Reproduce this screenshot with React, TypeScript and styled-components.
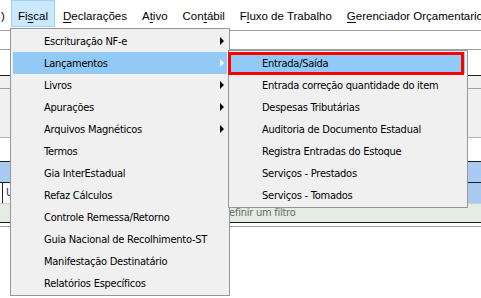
import React from 'react';
import styled, { createGlobalStyle } from 'styled-components';

const GlobalStyle = createGlobalStyle`
  html, body {
    margin: 0;
    padding: 0;
    background: #fff;
    overflow: hidden;
  }
`;

const Window = styled.div`
  position: relative;
  width: 481px;
  height: 298px;
  overflow: hidden;
  background: #fff;
  display: flex;
  flex-direction: column;
  font-family: "Liberation Sans", Arial, sans-serif;
`;

const MenuBar = styled.div`
  height: 30px;
  flex: none;
  display: flex;
  align-items: flex-start;
  border-bottom: 1px solid #a0a0a0;
  font-size: 11.5px;
  color: #000;
  white-space: nowrap;
`;

const BarItem = styled.div<{ $open?: boolean; $w?: number }>`
  box-sizing: border-box;
  height: 27px;
  padding: 9px 6px 0 6px;
  ${(p) => (p.$w ? `width: ${p.$w}px; padding-left: 0;` : '')}
  border: 1px solid ${(p) => (p.$open ? '#99d1ff' : 'transparent')};
  background: ${(p) => (p.$open ? '#cce8ff' : 'transparent')};
  margin-right: 1px;
  u {
    text-decoration: underline;
    text-underline-offset: 2px;
  }
`;

const Band = styled.div<{ $h: number; $bg?: string; $line?: string }>`
  flex: none;
  height: ${(p) => p.$h}px;
  background: ${(p) => p.$bg || '#fff'};
  border-bottom: 1px solid ${(p) => p.$line || '#a0a0a0'};
`;

const GridRow = styled.div<{ $h: number; $line?: string }>`
  flex: none;
  height: ${(p) => p.$h}px;
  display: flex;
  border-bottom: 1px solid ${(p) => p.$line || '#1e1e1e'};
`;

const Cell = styled.div<{ $w?: number; $bg: string }>`
  ${(p) => (p.$w ? `width: ${p.$w}px; flex: none;` : 'flex: 1;')}
  background: ${(p) => p.$bg};
`;

const RowHead = styled.div`
  width: 12px;
  flex: none;
  box-sizing: border-box;
  border-left: 1px solid #1e1e1e;
  margin-left: 2px;
  padding-left: 3px;
  font-size: 11px;
  line-height: 19px;
  color: #1e2a8a;
  background: #fff;
  overflow: hidden;
`;

const FilterRow = styled.div`
  flex: none;
  height: 18px;
  background: #e3ede1;
  border-bottom: 1px solid #1e1e1e;
  padding-left: 143px;
  font-family: "DejaVu Sans", Tahoma, sans-serif;
  font-stretch: condensed;
  font-size: 11px;
  letter-spacing: -0.25px;
  line-height: 18px;
  color: #6b6b6b;
  white-space: nowrap;
`;

const Menu = styled.div<{ $x: number; $y: number; $w: number }>`
  position: absolute;
  left: ${(p) => p.$x}px;
  top: ${(p) => p.$y}px;
  width: ${(p) => p.$w}px;
  box-sizing: border-box;
  padding: 1px 0;
  background: #f0f0f0;
  border: 1px solid #979797;
  font-family: "DejaVu Sans", Tahoma, sans-serif;
  font-stretch: condensed;
  font-size: 11px;
  letter-spacing: -0.25px;
  color: #000;
  z-index: 2;
`;

const Item = styled.div<{ $active?: boolean }>`
  position: relative;
  height: 22px;
  margin: 0 2px;
  padding-left: 31px;
  display: flex;
  align-items: center;
  background: ${(p) => (p.$active ? '#91c9f7' : 'transparent')};
  white-space: nowrap;
`;

const Arrow = styled.span<{ $active?: boolean }>`
  position: absolute;
  right: 3px;
  top: 7px;
  width: 0;
  height: 0;
  border-top: 4px solid transparent;
  border-bottom: 4px solid transparent;
  border-left: 4px solid ${(p) => (p.$active ? '#fff' : '#000')};
`;

const Mark = styled.span`
  position: absolute;
  left: -3px;
  right: 1px;
  top: 0;
  bottom: -1px;
  border: 3px solid #ff0000;
  pointer-events: none;
`;

const fiscal: { label: string; sub?: boolean }[] = [
  { label: 'Escrituração NF-e', sub: true },
  { label: 'Lançamentos', sub: true },
  { label: 'Livros', sub: true },
  { label: 'Apurações', sub: true },
  { label: 'Arquivos Magnéticos', sub: true },
  { label: 'Termos' },
  { label: 'Gia InterEstadual' },
  { label: 'Refaz Cálculos' },
  { label: 'Controle Remessa/Retorno' },
  { label: 'Guia Nacional de Recolhimento-ST' },
  { label: 'Manifestação Destinatário' },
  { label: 'Relatórios Específicos' },
];

const lancamentos = [
  'Entrada/Saída',
  'Entrada correção quantidade do item',
  'Despesas Tributárias',
  'Auditoria de Documento Estadual',
  'Registra Entradas do Estoque',
  'Serviços - Prestados',
  'Serviços - Tomados',
];

export default function App() {
  return (
    <Window>
      <GlobalStyle />
      <MenuBar>
        <BarItem $w={10}>)</BarItem>
        <BarItem $open>
          Fi<u>s</u>cal
        </BarItem>
        <BarItem>
          <u>D</u>eclarações
        </BarItem>
        <BarItem>
          A<u>t</u>ivo
        </BarItem>
        <BarItem>
          Con<u>t</u>ábil
        </BarItem>
        <BarItem>
          F<u>l</u>uxo de Trabalho
        </BarItem>
        <BarItem>
          <u>G</u>erenciador Orçamentario
        </BarItem>
      </MenuBar>
      <Band $h={18} />
      <Band $h={25} $line="#1e1e1e" />
      <Band $h={12} $bg="#f0f0f0" />
      <Band $h={48} $bg="#f0f0f0" $line="#b4b4b4" />
      <Band $h={23} $line="#1e1e1e" />
      <GridRow $h={20}>
        <Cell $bg="#a9cbf1" />
      </GridRow>
      <GridRow $h={20} $line="#cfcfcf">
        <RowHead>U</RowHead>
        <Cell $bg="#a9cbf1" />
      </GridRow>
      <FilterRow>Clique aqui para definir um filtro</FilterRow>
      <Band $h={3} />

      <Menu $x={10} $y={28} $w={220}>
        {fiscal.map((it, i) => (
          <Item key={it.label} $active={i === 1}>
            {it.label}
            {it.sub && <Arrow $active={i === 1} />}
          </Item>
        ))}
      </Menu>
      <Menu $x={228} $y={50} $w={240}>
        {lancamentos.map((label, i) => (
          <Item key={label} $active={i === 0}>
            {label}
            {i === 0 && <Mark />}
          </Item>
        ))}
      </Menu>
    </Window>
  );
}
